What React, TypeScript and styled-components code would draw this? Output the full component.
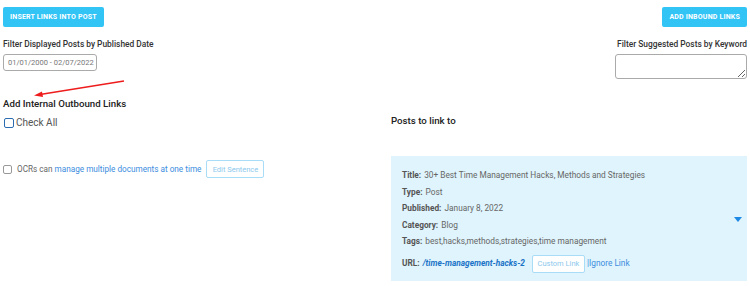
import React from "react";
import styled, { createGlobalStyle } from "styled-components";

const Global = createGlobalStyle`
  html, body { margin: 0; padding: 0; background: #fff; }
  body { font-family: Roboto, "Noto Sans", Arial, sans-serif; color: #333; }
`;

const Page = styled.div`
  width: 750px;
  height: 286px;
  box-sizing: border-box;
  padding: 7px 3px 0 3px;
  position: relative;
  overflow: hidden;
`;

const TopBar = styled.div`
  display: flex;
  justify-content: space-between;
  align-items: flex-start;
`;

const PrimaryButton = styled.button`
  height: 20px;
  padding: 0 7px;
  border: none;
  border-radius: 2px;
  background: #33c4f6;
  color: #fff;
  font-family: inherit;
  font-size: 7px;
  font-weight: 700;
  letter-spacing: 0.2px;
  text-transform: uppercase;
`;

const FilterRow = styled.div`
  display: flex;
  justify-content: space-between;
  margin-top: 12px;
`;

const FilterGroup = styled.div<{ $right?: boolean }>`
  display: flex;
  flex-direction: column;
  align-items: ${(p) => (p.$right ? "flex-end" : "flex-start")};
`;

const Label = styled.div`
  font-size: 8.4px;
  font-weight: 500;
  color: #333;
  line-height: 11px;
`;

const DateInput = styled.div`
  margin-top: 4px;
  width: 94px;
  height: 17px;
  box-sizing: border-box;
  border: 1px solid #aaa;
  border-radius: 3px;
  font-size: 7.5px;
  color: #777;
  display: flex;
  align-items: center;
  padding-left: 4px;
`;

const KeywordBox = styled.textarea`
  margin-top: 4px;
  width: 132px;
  height: 25px;
  box-sizing: border-box;
  border: 1px solid #aaa;
  border-radius: 3px;
  resize: vertical;
`;

const Main = styled.div`
  display: flex;
  margin-top: 19px;
`;

const LeftCol = styled.div`
  width: 388px;
  display: flex;
  flex-direction: column;
`;

const RightCol = styled.div`
  flex: 1;
  display: flex;
  flex-direction: column;
  padding-top: 17px;
`;

const SectionTitle = styled.div`
  font-size: 9.7px;
  font-weight: 500;
  color: #222;
  line-height: 12px;
`;

const CheckAllRow = styled.label`
  display: flex;
  align-items: center;
  gap: 2px;
  margin-top: 7px;
  font-size: 10px;
  color: #555;
`;

const BlueBox = styled.span`
  width: 8px;
  height: 8px;
  border: 1.5px solid #2b6cb0;
  border-radius: 2px;
  margin-left: 1px;
`;

const SentenceRow = styled.div`
  display: flex;
  align-items: center;
  margin-top: 32px;
  font-size: 8.2px;
  color: #666;
`;

const GrayBox = styled.span`
  width: 7px;
  height: 7px;
  border: 1px solid #999;
  border-radius: 2px;
  margin-right: 5px;
`;

const Link = styled.span<{ $bold?: boolean }>`
  color: ${(p) => (p.$bold ? "#1a73c7" : "#3c8dde")};
  font-weight: ${(p) => (p.$bold ? 700 : 400)};
  font-style: ${(p) => (p.$bold ? "italic" : "normal")};
`;

const GhostButton = styled.span<{ $w: number }>`
  display: inline-flex;
  align-items: center;
  justify-content: center;
  width: ${(p) => p.$w}px;
  height: 18px;
  box-sizing: border-box;
  border: 1px solid #a9dcf6;
  border-radius: 2px;
  background: #fff;
  color: #8cc8ec;
  font-size: 7.5px;
`;

const Card = styled.div`
  margin-top: 29px;
  height: 125px;
  box-sizing: border-box;
  background: #dff4fc;
  padding: 14px 11px 0 11px;
  position: relative;
  display: flex;
  flex-direction: column;
  gap: 5px;
`;

const Field = styled.div`
  font-size: 8.3px;
  line-height: 11.5px;
  color: #666;
  display: flex;
  align-items: center;
  white-space: nowrap;
`;

const Key = styled.b`
  color: #555;
  font-weight: 700;
  margin-right: 3px;
`;

const Caret = styled.div`
  position: absolute;
  right: 5px;
  top: 61px;
  width: 0;
  height: 0;
  border-left: 4px solid transparent;
  border-right: 4px solid transparent;
  border-top: 5px solid #1e88e5;
`;

const Arrow = styled.svg`
  position: absolute;
  left: 0;
  top: 0;
  pointer-events: none;
`;

export default function App() {
  return (
    <>
      <Global />
      <Page>
        <TopBar>
          <PrimaryButton>Insert Links into Post</PrimaryButton>
          <PrimaryButton>Add Inbound Links</PrimaryButton>
        </TopBar>
        <FilterRow>
          <FilterGroup>
            <Label>Filter Displayed Posts by Published Date</Label>
            <DateInput>01/01/2000 - 02/07/2022</DateInput>
          </FilterGroup>
          <FilterGroup $right>
            <Label>Filter Suggested Posts by Keyword</Label>
            <KeywordBox />
          </FilterGroup>
        </FilterRow>
        <Main>
          <LeftCol>
            <SectionTitle>Add Internal Outbound Links</SectionTitle>
            <CheckAllRow>
              <BlueBox />
              Check All
            </CheckAllRow>
            <SentenceRow>
              <GrayBox />
              OCRs can&nbsp;<Link>manage multiple documents at one time</Link>
              <GhostButton $w={58} style={{ marginLeft: 5 }}>Edit Sentence</GhostButton>
            </SentenceRow>
          </LeftCol>
          <RightCol>
            <SectionTitle>Posts to link to</SectionTitle>
            <Card>
              <Field><Key>Title:</Key>30+ Best Time Management Hacks, Methods and Strategies</Field>
              <Field><Key>Type:</Key>Post</Field>
              <Field><Key>Published:</Key>January 8, 2022</Field>
              <Field><Key>Category:</Key>Blog</Field>
              <Field><Key>Tags:</Key>best,hacks,methods,strategies,time management</Field>
              <Field style={{ marginTop: 2 }}>
                <Key>URL:</Key>
                <Link $bold>/time-management-hacks-2</Link>
                <GhostButton $w={53} style={{ marginLeft: 7, marginRight: 2 }}>Custom Link</GhostButton>
                <Link>|Ignore Link</Link>
              </Field>
              <Caret />
            </Card>
          </RightCol>
        </Main>
        <Arrow width="750" height="286">
          <line x1="124" y1="81" x2="40" y2="94.5" stroke="#ee1c1c" strokeWidth="1.5" />
          <polygon points="34,95.5 42,91.5 43,97" fill="#ee1c1c" />
        </Arrow>
      </Page>
    </>
  );
}
